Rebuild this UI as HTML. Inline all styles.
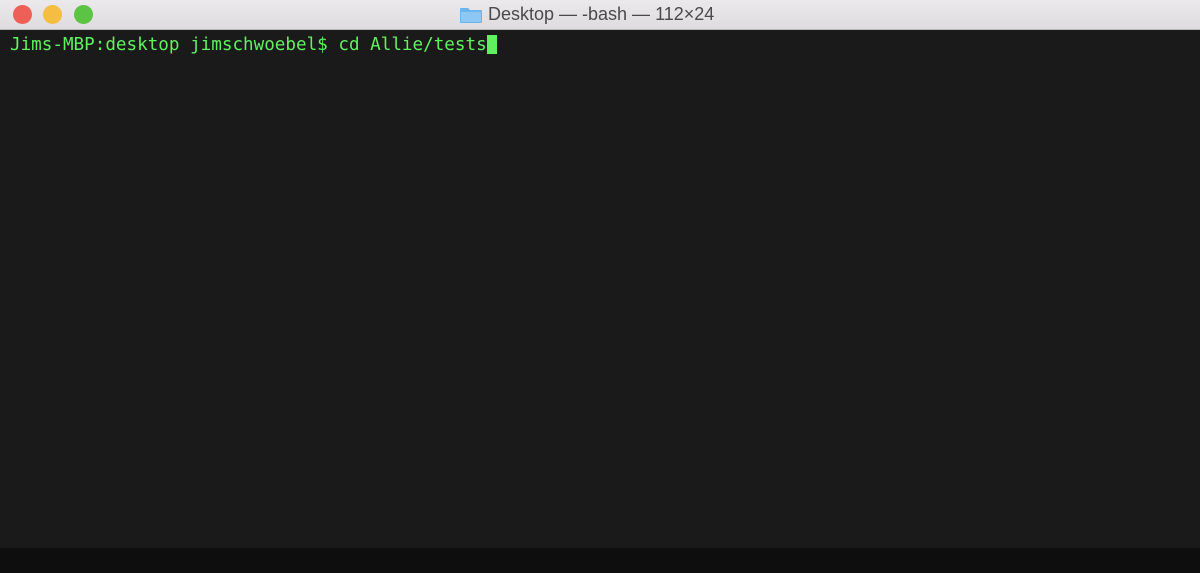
<!DOCTYPE html>
<html><head><style>
html,body{margin:0;padding:0;width:1200px;height:573px;overflow:hidden;background:#0e0e0e}
.title{position:absolute;left:0;top:0;width:1200px;height:29px;background:linear-gradient(#ebe9eb,#dedcde);border-bottom:1px solid #b8b8b8}
.dot{position:absolute;top:5px;width:19px;height:19px;border-radius:50%}
.t{position:absolute;left:488px;top:4px;font:18px "Liberation Sans",sans-serif;color:#4a4a4a;white-space:nowrap}
.term{position:absolute;left:0;top:30px;width:1200px;height:518px;background:#1a1a1a}
.line{position:absolute;left:10px;top:34px;font:17.6px/22px "DejaVu Sans Mono","Liberation Mono",monospace;color:#5ff15f;white-space:pre}
.cur{position:absolute;left:487px;top:35px;width:10px;height:19px;background:#5ff15f}
</style></head><body>
<div class="title">
<div class="dot" style="left:13px;background:#ed5f57"></div>
<div class="dot" style="left:43px;background:#f5bd41"></div>
<div class="dot" style="left:74px;background:#5cc443"></div>
<svg style="position:absolute;left:459px;top:6px" width="24" height="18" viewBox="0 0 24 18"><path d="M1 3a1 1 0 0 1 1-1h7l2 2h11a1 1 0 0 1 1 1v11a1 1 0 0 1-1 1H2a1 1 0 0 1-1-1z" fill="#6cb4ec"/><rect x="2" y="6" width="20" height="10" fill="#8dc8f4"/></svg>
<div class="t">Desktop — -bash — 112×24</div>
</div>
<div class="term"></div>
<div class="line">Jims-MBP:desktop jimschwoebel$ cd Allie/tests</div>
<div class="cur"></div>
</body></html>
